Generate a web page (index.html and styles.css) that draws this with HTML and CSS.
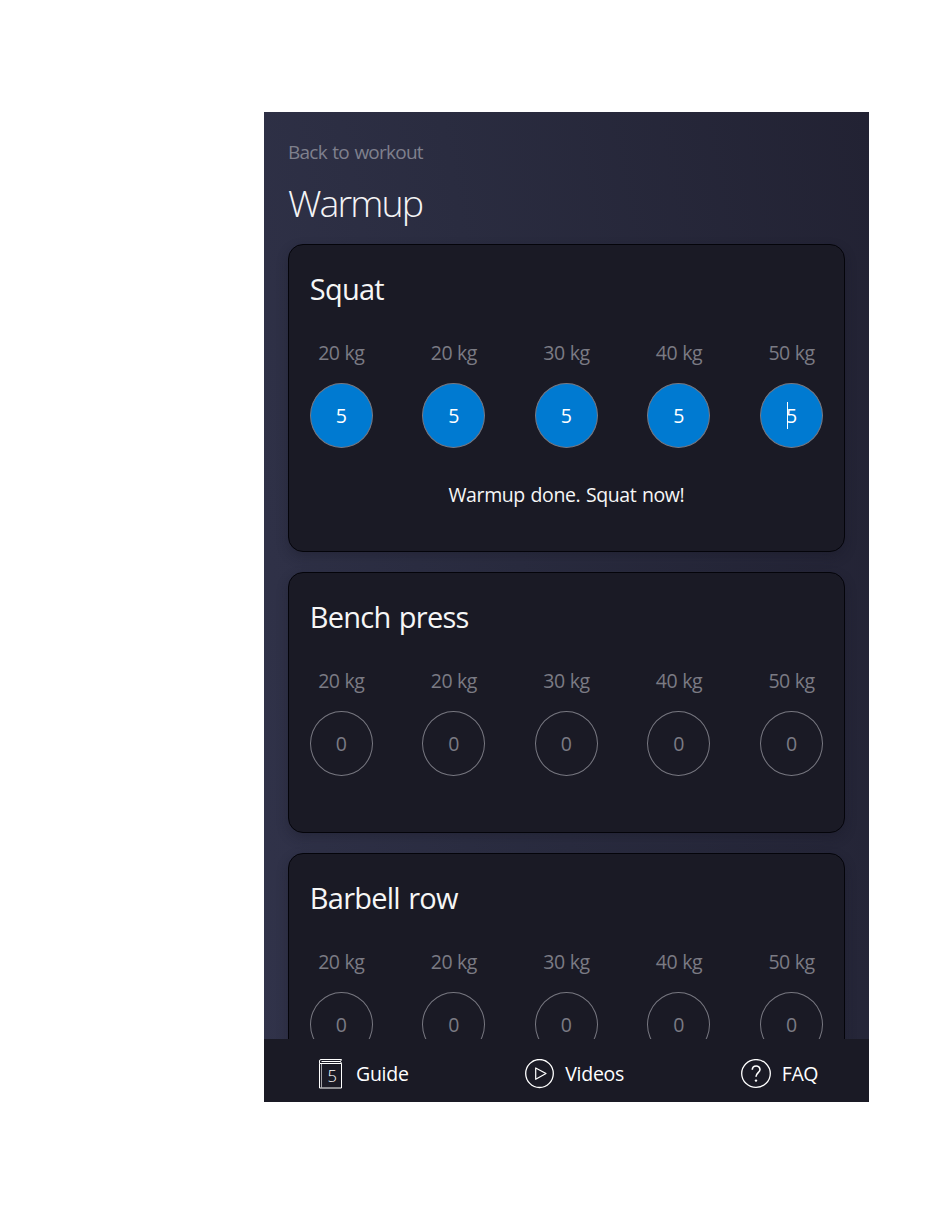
FILE: index.html
```html
<!DOCTYPE html>
<html lang="en">
<head>
<meta charset="utf-8">
<title>Warmup</title>
<link rel="stylesheet" href="styles.css">
</head>
<body>
<div class="app">
  <main class="content">
    <a class="back">Back to workout</a>
    <h1 class="title">Warmup</h1>
    <section class="card card-done">
      <h2 class="name">Squat</h2>
      <div class="sets">
        <div class="set"><span class="weight">20 kg</span><span class="reps done">5</span></div>
        <div class="set"><span class="weight">20 kg</span><span class="reps done">5</span></div>
        <div class="set"><span class="weight">30 kg</span><span class="reps done">5</span></div>
        <div class="set"><span class="weight">40 kg</span><span class="reps done">5</span></div>
        <div class="set"><span class="weight">50 kg</span><span class="reps done focused">5</span></div>
      </div>
      <p class="message">Warmup done. Squat now!</p>
    </section>
    <section class="card">
      <h2 class="name">Bench press</h2>
      <div class="sets">
        <div class="set"><span class="weight">20 kg</span><span class="reps">0</span></div>
        <div class="set"><span class="weight">20 kg</span><span class="reps">0</span></div>
        <div class="set"><span class="weight">30 kg</span><span class="reps">0</span></div>
        <div class="set"><span class="weight">40 kg</span><span class="reps">0</span></div>
        <div class="set"><span class="weight">50 kg</span><span class="reps">0</span></div>
      </div>
    </section>
    <section class="card">
      <h2 class="name">Barbell row</h2>
      <div class="sets">
        <div class="set"><span class="weight">20 kg</span><span class="reps">0</span></div>
        <div class="set"><span class="weight">20 kg</span><span class="reps">0</span></div>
        <div class="set"><span class="weight">30 kg</span><span class="reps">0</span></div>
        <div class="set"><span class="weight">40 kg</span><span class="reps">0</span></div>
        <div class="set"><span class="weight">50 kg</span><span class="reps">0</span></div>
      </div>
    </section>
  </main>
  <nav class="tabs">
    <a class="tab">
      <span class="book">
        <svg width="24" height="31" viewBox="0 0 24 31" fill="none" stroke="#fff">
          <path d="M.5 4.500h22v24.500H.5zM.5 4.500V2Q.5.500 2 .5h20.500L21.500 2.500 22.500 4.500M2.500 2.500h19"/>
          <path d="M2.500 4.500v24" stroke-opacity=".6"/>
        </svg>
        <span class="book-digit">5</span>
      </span>
      <span class="label">Guide</span>
    </a>
    <a class="tab">
      <svg width="29" height="30" viewBox="0 0 29 30" fill="none" stroke="#fff" stroke-width="1.300">
        <ellipse cx="14.500" cy="14.500" rx="13.800" ry="14"/>
        <path d="M10.700 9v11.300L21 14.500z" stroke-linejoin="round" stroke-width="1.200"/>
      </svg>
      <span class="label">Videos</span>
    </a>
    <a class="tab tab-faq">
      <svg width="30" height="30" viewBox="0 0 30 30" fill="none" stroke="#fff" stroke-width="1.300">
        <ellipse cx="15" cy="14.500" rx="14.300" ry="13.900"/>
        <path d="M11.300 10.800C11.300 5.700 19 5.700 19 10.500c0 3.200-4 3.200-4 7.300" stroke-width="1.600"/>
        <circle cx="15" cy="21.600" r="1.200" fill="#fff" stroke="none"/>
      </svg>
      <span class="label">FAQ</span>
    </a>
  </nav>
</div>
</body>
</html>
```
FILE: styles.css
```css
* { box-sizing: border-box; }
body {
  margin: 0;
  padding: 112px 69px 112px 264px;
  background: #fff;
  font-family: "Segoe UI", "Open Sans", "Noto Sans", sans-serif;
  font-size: 19.5px;
  letter-spacing: -0.27px;
  color: #fff;
}
h1, h2, p { margin: 0; font-weight: 400; }
.app {
  width: 605px;
  height: 990px;
  overflow: hidden;
  display: flex;
  flex-direction: column;
  background: linear-gradient(260deg, #222233 0%, #2a2c40 55%, #31334a 100%);
}
.content {
  flex: 1;
  min-height: 0;
  overflow: hidden;
  padding: 24px 24px 0;
}
.back {
  display: block;
  height: 34px;
  line-height: 33px;
  color: #7f808d;
  font-size: 19px;
  letter-spacing: -0.75px;
  word-spacing: 1.2px;
}
.title {
  height: 74px;
  line-height: 66px;
  font-size: 37.5px;
  font-weight: 300;
  color: #f4f4f6;
  letter-spacing: -1.9px;
}
.card {
  height: 261px;
  margin-bottom: 20px;
  padding: 23px 21px 0 20.8px;
  background: #1a1a25;
  border: 1px solid #04040a;
  border-radius: 15px;
  box-shadow: 0 5px 12px rgba(20, 20, 32, 0.3);
}
.card-done { height: 308px; }
.name {
  height: 66px;
  line-height: 42px;
  font-size: 29px;
  letter-spacing: -0.75px;
  word-spacing: 1.5px;
  color: #f6f6f6;
}
.sets { display: flex; justify-content: space-between; }
.set {
  width: 63px;
  display: flex;
  flex-direction: column;
  align-items: center;
}
.weight {
  height: 49px;
  line-height: 38px;
  white-space: nowrap;
  letter-spacing: -0.5px;
  word-spacing: 0.5px;
  color: #7b7b84;
}
.reps {
  position: relative;
  width: 63px;
  height: 65px;
  line-height: 63px;
  border: 1px solid #777780;
  border-radius: 50%;
  text-align: center;
  letter-spacing: 0;
  color: #7b7b84;
}
.reps.done { line-height: 64px; background: #007ad1; color: #fff; }
.focused::before {
  content: "";
  position: absolute;
  left: 26px;
  top: 18px;
  width: 1px;
  height: 27px;
  background: #fff;
}
.message {
  height: 40px;
  margin-top: 27px;
  line-height: 40px;
  text-align: center;
  letter-spacing: -0.4px;
  word-spacing: 1px;
  color: #f6f6f6;
}
.tabs {
  height: 63px;
  padding: 6px 51px 0 55px;
  display: flex;
  justify-content: space-between;
  background: #1a1a25;
}
.tab {
  height: 58px;
  display: flex;
  align-items: center;
  gap: 11px;
}
.tab-faq { letter-spacing: -0.45px; }
.tab svg { display: block; }
.label { padding-bottom: 2px; }
.book { position: relative; width: 26px; }
.book-digit {
  position: absolute;
  left: 1px;
  top: 7px;
  width: 24px;
  font-size: 16.5px;
  font-weight: 300;
  line-height: 20px;
  text-align: center;
}
```
